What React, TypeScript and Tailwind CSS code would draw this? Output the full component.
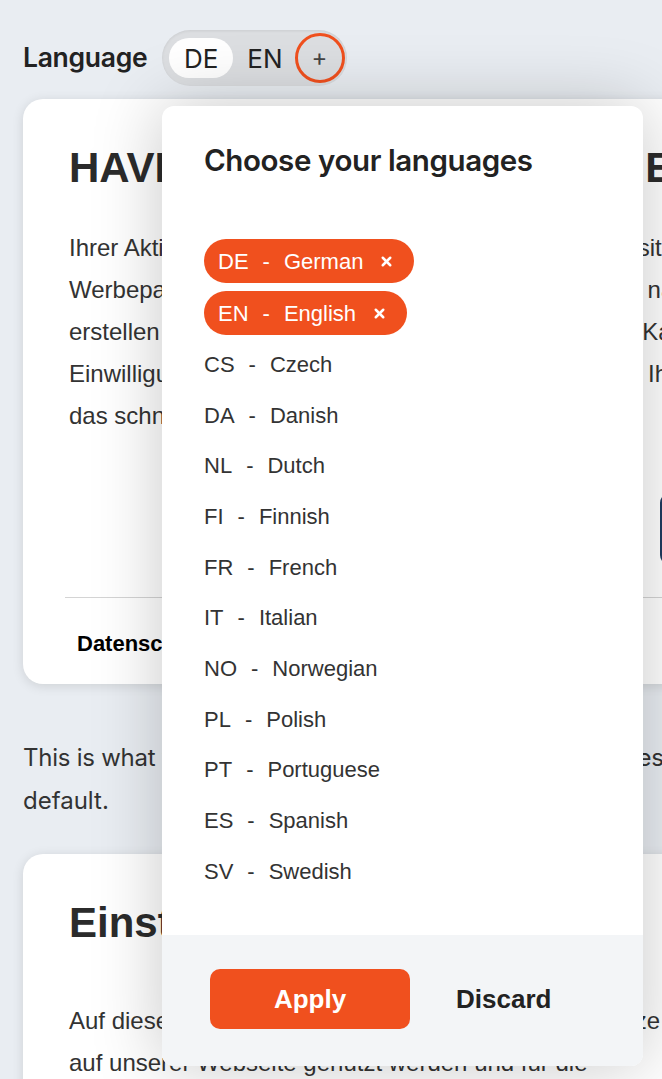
import { X } from 'lucide-react'

const chosen = [
  { code: 'DE', name: 'German' },
  { code: 'EN', name: 'English' },
]

const others = [
  { code: 'CS', name: 'Czech' },
  { code: 'DA', name: 'Danish' },
  { code: 'NL', name: 'Dutch' },
  { code: 'FI', name: 'Finnish' },
  { code: 'FR', name: 'French' },
  { code: 'IT', name: 'Italian' },
  { code: 'NO', name: 'Norwegian' },
  { code: 'PL', name: 'Polish' },
  { code: 'PT', name: 'Portuguese' },
  { code: 'ES', name: 'Spanish' },
  { code: 'SV', name: 'Swedish' },
]

const arial = { fontFamily: '"Liberation Sans", Arial, sans-serif' }
const inter = { fontFamily: 'Inter, "Liberation Sans", sans-serif' }

function LanguagePicker() {
  return (
    <div
      className="absolute left-[162px] top-[106px] w-[481px] h-[960px] flex flex-col bg-white rounded-[12px] shadow-[0_0_70px_rgba(0,0,0,0.22)] overflow-hidden"
      style={arial}
    >
      <div className="flex-1 pl-[42px] pt-[34px]">
        <h2 className="text-[29.5px] leading-[40px] font-semibold text-[#222] tracking-[-0.4px]" style={inter}>
          Choose your languages
        </h2>

        <div className="mt-[59px] flex flex-col items-start gap-[8px]">
          {chosen.map((l) => (
            <span
              key={l.code}
              className="h-[44px] flex items-center rounded-full bg-[#f0501e] pl-[14px] pr-[20px] text-[22px] text-white"
            >
              <span>{l.code}</span>
              <span className="mx-[14px]">-</span>
              <span>{l.name}</span>
              <X className="ml-[16px] w-[15px] h-[15px]" strokeWidth={4} />
            </span>
          ))}
        </div>

        <ul className="mt-[4px] flex flex-col">
          {others.map((l) => (
            <li key={l.code} className="h-[50.7px] flex items-center text-[22px] text-[#333]">
              <span>{l.code}</span>
              <span className="mx-[14px]">-</span>
              <span>{l.name}</span>
            </li>
          ))}
        </ul>
      </div>

      <div className="h-[131px] shrink-0 bg-[#f3f5f7] flex items-start pt-[34px] pl-[48px] gap-[46px]">
        <button className="w-[200px] h-[60px] rounded-[10px] bg-[#f0501e] text-white text-[26px] font-bold">
          Apply
        </button>
        <button className="h-[60px] text-[26px] font-bold text-[#222]">Discard</button>
      </div>
    </div>
  )
}

export default function App() {
  return (
    <div className="relative w-[662px] h-[1079px] overflow-hidden bg-[#e9edf2] text-[#333]">
      <div className="pl-[23px] pt-[30px]">
        {/* Sprachumschalter */}
        <div className="flex items-center gap-[15px]" style={inter}>
          <span className="text-[26.5px] font-semibold text-[#222] tracking-[-0.3px]">Language</span>
          <div className="h-[56px] flex items-center rounded-full bg-[#dcdee1] pl-[7px] pr-[2px] shadow-[inset_0_1px_3px_rgba(0,0,0,0.08)]">
            <span className="h-[40px] w-[64px] flex items-center justify-center rounded-full bg-white text-[26px] text-[#222]">
              DE
            </span>
            <span className="ml-[14px] text-[26px] text-[#222]">EN</span>
            <span className="ml-[12px] w-[50px] h-[50px] flex items-center justify-center rounded-full border-[3px] border-[#f0501e] text-[24px] text-[#444]">
              +
            </span>
          </div>
        </div>

        {/* Karte 1 */}
        <div className="mt-[13px] w-[720px] h-[585px] rounded-[20px] bg-white shadow-[0_2px_12px_rgba(0,0,0,0.12)] pt-[44px]" style={arial}>
          <div className="pl-[46px]">
            <h1 className="text-[42px] leading-[50px] font-bold text-[#2b2b2b] whitespace-nowrap">
              HAVING TROUBLE WITH AN EMBED?
            </h1>
            <div className="mt-[34px] text-[24px] leading-[42px] text-[#333] whitespace-nowrap">
              <p>Ihrer Aktivitäten auf unserer Webseite und in der Website</p>
              <p>Werbepartner und Analysepartner anhand ihrer Daten nach</p>
              <p>erstellen zu können, um Ihnen gezielt Werbung, Infos Kampagnen</p>
              <p>Einwilligung jederzeit in den Einstellungen widerrufen. Ihre Daten</p>
              <p>das schnell und einfach geht.</p>
            </div>
            <div className="mt-[56px] flex">
              <span className="ml-[591px] w-[80px] h-[72px] rounded-[10px] border-2 border-[#1f3a5f]" />
            </div>
          </div>
          <div className="mt-[32px] ml-[42px] border-t border-[#d4d4d4] pl-[12px] pt-[29px]">
            <span className="text-[22px] font-bold text-black">Datenschutzerklärung</span>
          </div>
        </div>

        <div className="mt-[52px] text-[24px] leading-[43px] text-[#333]" style={inter}>
          <p className="whitespace-nowrap tracking-[-0.25px]">This is what visitors will see if the cookie popup only uses</p>
          <p>default.</p>
        </div>

        {/* Karte 2 */}
        <div className="mt-[32px] w-[720px] h-[400px] rounded-[20px] bg-white shadow-[0_2px_12px_rgba(0,0,0,0.12)] pt-[44px] pl-[46px]" style={arial}>
          <h1 className="text-[42px] leading-[50px] font-bold text-[#2b2b2b] whitespace-nowrap">Einstellungen</h1>
          <div className="mt-[52px] text-[24px] leading-[42px] text-[#333] whitespace-nowrap">
            <p>Auf dieser Seite können Sie festlegen, welche Daten ze</p>
            <p>auf unserer Webseite genutzt werden und für die</p>
          </div>
        </div>
      </div>

      <LanguagePicker />
    </div>
  )
}
